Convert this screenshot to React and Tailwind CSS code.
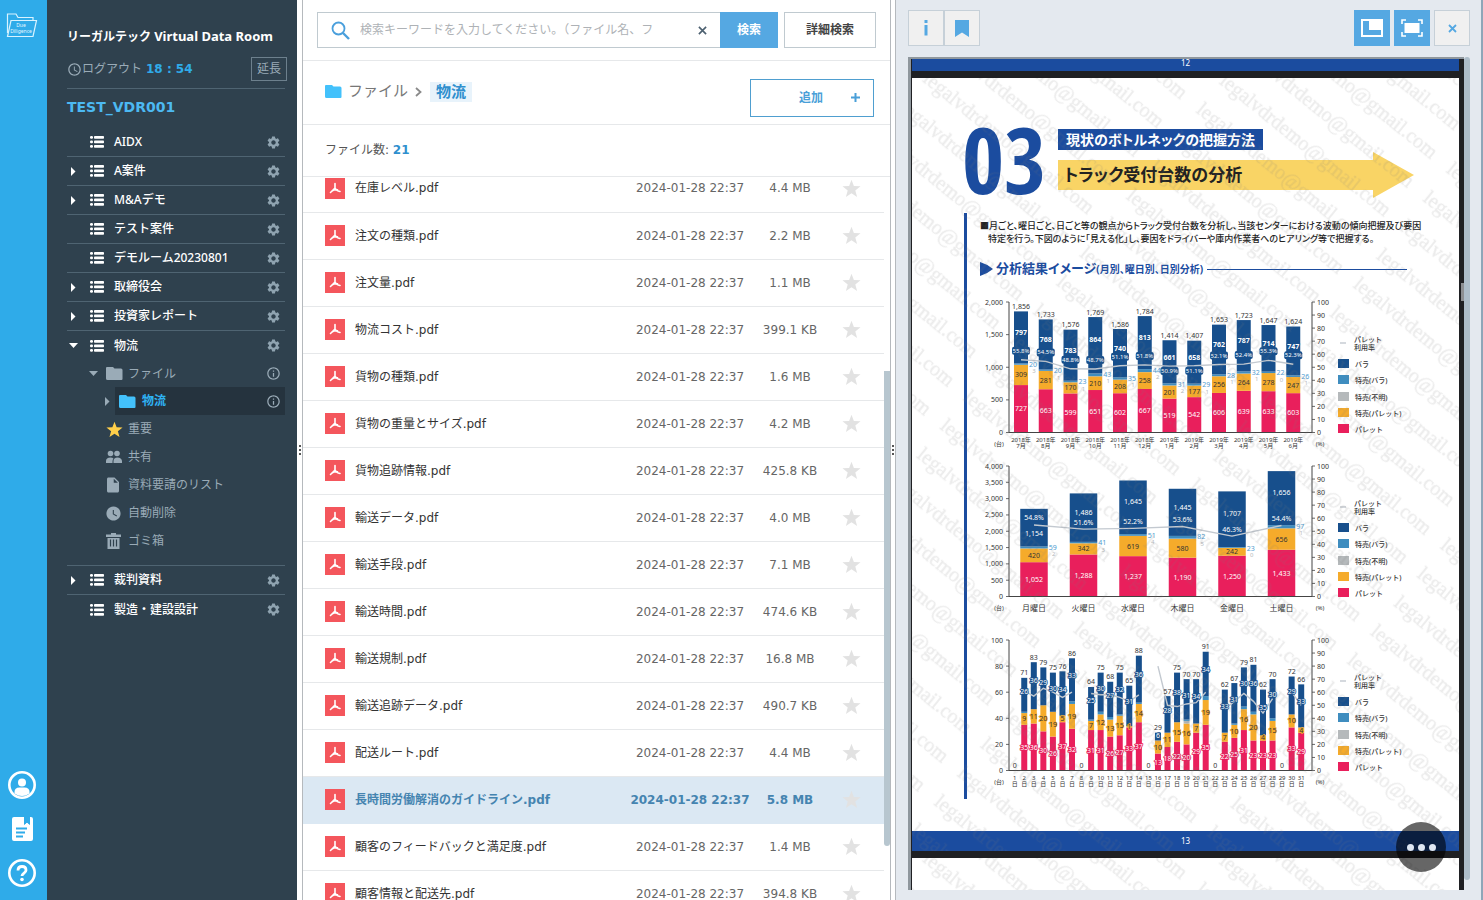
import React from "react";
import { MdSettings, MdInfoOutline, MdInsertDriveFile, MdWatchLater, MdAccessTime } from "react-icons/md";

const CJK = "font-['Noto_Sans','Noto_Sans_CJK_JP',sans-serif]";

const ListIcon = () => (
  <svg width="14" height="12" viewBox="0 0 14 12" fill="#fff" aria-hidden="true">
    {[0, 4.5, 9].map((y) => (
      <g key={y}>
        <rect x="0" y={y} width="3" height="2.8" rx="1.2" />
        <rect x="4" y={y} width="10" height="2.8" rx="0.8" />
      </g>
    ))}
  </svg>
);

const Caret = ({ open, className = "" }) => (
  <svg width="9" height="9" viewBox="0 0 9 9" fill="currentColor" className={className} aria-hidden="true">
    {open ? <path d="M0 2h9L4.500 7z" /> : <path d="M2 0v9L6.500 4.500z" />}
  </svg>
);

const Folder = ({ color }) => (
  <svg width="17" height="15" viewBox="0 0 17 15" aria-hidden="true">
    <path d="M0 2Q0 1 1 1h6l1.500 1.500H15q1.500 0 1.500 1.500V13q0 1-1 1H1.500Q0 14 0 12.500z" fill={color} />
  </svg>
);

const Star = ({ size, color }) => (
  <svg width={size} height={size} viewBox="0 0 20 20" fill={color} aria-hidden="true">
    <path d="M10 .8l2.500 6.600 7 .3-5.500 4.400 1.900 6.800L10 15l-5.900 3.900L6 12.100.5 7.700l7-.3z" />
  </svg>
);

const People = () => (
  <svg width="16" height="14" viewBox="0 0 16 14" fill="#9aabb7" aria-hidden="true">
    <circle cx="4.500" cy="3.500" r="2.800" />
    <circle cx="11" cy="3.500" r="2.800" />
    <path d="M0 13v-2q0-3.500 4.500-3.500 2 0 3 1-1 1.200-1 3V13zM7.500 13v-2Q7.500 7.500 11.500 7.500T16 11v2z" />
  </svg>
);

const Trash = () => (
  <svg width="15" height="16" viewBox="0 0 15 16" aria-hidden="true">
    <path d="M5 0h5v1.500h5V4H0V1.500h5zM1.500 5h12v11h-12z" fill="#9aabb7" />
    <path d="M4.500 6.500v7M7.500 6.500v7M10.500 6.500v7" stroke="#2f414e" strokeWidth="1.200" />
  </svg>
);

const PdfIcon = () => (
  <svg width="20" height="21" viewBox="0 0 20 21" aria-hidden="true">
    <rect width="20" height="21" fill="#f4565c" />
    <path d="M10 5.500v4.500M10 10l-4.500 4.500M10 10q1.500 3 5 3.500M7 13q2-1.500 5.500-1.200" fill="none" stroke="#fff" strokeWidth="1.600" strokeLinecap="round" />
  </svg>
);

const topItems = [
  { name: "AIDX" },
  { name: "A案件", caret: true },
  { name: "M&Aデモ", caret: true },
  { name: "テスト案件" },
  { name: "デモルーム20230801" },
  { name: "取締役会", caret: true },
  { name: "投資家レポート", caret: true },
];
const bottomItems = [{ name: "裁判資料", caret: true, last: false }, { name: "製造・建設設計", last: true }];

function RoomItem({ item, border = true, open = false }) {
  return (
    <div className={"flex h-[29px] items-center " + (border ? "border-b border-[#4f6472]" : "")}>
      <button aria-label={item.name + "を展開"} className="flex w-[23px] items-center pl-[2px] text-white">
        {(item.caret || open) && <Caret open={open} />}
      </button>
      <ListIcon />
      <a href="#" className="ml-[10px] flex-1 text-[12px] font-medium text-white">{item.name}</a>
      <button aria-label={item.name + "の設定"} className="mr-1 text-[#8fa3b0]"><MdSettings size={15} /></button>
    </div>
  );
}

function SubItem({ icon, children }) {
  return (
    <a href="#" className="flex h-7 items-center pl-[39px] text-[12px] text-[#9aabb7]">
      <span className="flex w-[22px] items-center">{icon}</span>
      {children}
    </a>
  );
}

function Rail() {
  return (
    <nav className="flex w-[47px] shrink-0 flex-col items-center justify-between bg-[#2fabe9] pb-[13px] pr-[3px] pt-[13px]">
      <a href="#" aria-label="Due Diligence">
        <svg width="32" height="26" viewBox="0 0 32 26" fill="none" stroke="#d9f3ff" strokeWidth="1.200">
          <path d="M1.500 20V1h8.500l2 3.500h15V7.500" />
          <path d="M5 7.500h25.500L27 23.500H1.500z" />
          <text x="15" y="14" fontSize="5" textAnchor="middle" fill="#e6f8ff" stroke="none" fontFamily="Noto Sans">Due</text>
          <text x="15" y="20" fontSize="5" textAnchor="middle" fill="#e6f8ff" stroke="none" fontFamily="Noto Sans">Diligence</text>
        </svg>
      </a>
      <div className="flex flex-col items-center gap-4">
        <button aria-label="アカウント">
          <svg width="28" height="28" viewBox="0 0 28 28">
            <circle cx="14" cy="14" r="12.700" fill="none" stroke="#fff" strokeWidth="2.600" />
            <circle cx="14" cy="11.500" r="4" fill="#fff" />
            <path d="M6.500 22.500v-1.500q0-4.500 5-4.500h5q5 0 5 4.500v1.500q-7.500 5-15 0z" fill="#fff" />
          </svg>
        </button>
        <button aria-label="マニュアル">
          <svg width="28" height="28" viewBox="0 0 28 28">
            <path d="M6 2h10v8l3-2.500 3 2.500V2h1q2 0 2 2v20q0 2-2 2H6q-2 0-2-2V4q0-2 2-2z" fill="#fff" />
            <path d="M8 13.500h11M8 17.500h9M8 21.500h7" stroke="#2fabe9" strokeWidth="1.800" />
            <path d="M16.500 2v7l2.500-2.200L21.500 9V2" fill="none" stroke="#2fabe9" strokeWidth="1" />
          </svg>
        </button>
        <button aria-label="ヘルプ">
          <svg width="28" height="28" viewBox="0 0 28 28" fill="none" stroke="#fff">
            <circle cx="14" cy="14" r="12.700" strokeWidth="2.600" />
            <path d="M10 11.500q0-4 4-4t4 3.700c0 3-4 2.800-4 5.800" strokeWidth="2.800" />
            <circle cx="14" cy="20.500" r="1.800" fill="#fff" stroke="none" />
          </svg>
        </button>
      </div>
    </nav>
  );
}

function Sidebar() {
  return (
    <aside className="w-[250px] shrink-0 bg-[#2f414e] pl-5 pr-3 pt-[26px]">
      <h1 className="whitespace-nowrap text-[12px] font-bold leading-5 text-white">
        リーガルテック <span className="text-[13px]">Virtual Data Room</span>
      </h1>
      <div className="mt-[10px] flex h-6 items-center justify-between">
        <span className="flex items-center text-[12px] text-[#9aabb7]">
          <MdAccessTime size={15} />
          <span>ログアウト</span>
          <span className="ml-1 font-['DejaVu_Sans',sans-serif] text-[12px] font-bold text-[#2fabe9]">18 : 54</span>
        </span>
        <button className="-mr-[2px] h-6 border border-[#6d808d] px-[5px] text-[12px] leading-5 text-[#9aabb7]">延長</button>
      </div>
      <div className="mt-[7px] border-t border-[#4f6472] pb-[12px] pt-[9px] font-['DejaVu_Sans',sans-serif] text-[14px] font-bold leading-[18px] text-[#4cb9f2]">TEST_VDR001</div>
      {topItems.map((it) => <RoomItem key={it.name} item={it} />)}
      <RoomItem item={{ name: "物流" }} open border={false} />
      <div className="border-b border-[#4f6472] pb-[10px]">
        <div className="flex h-[27px] items-center pl-[22px] text-[12px] text-[#9aabb7]">
          <Caret open />
          <span className="ml-2"><Folder color="#9aabb7" /></span>
          <a href="#" className="ml-[5px] flex-1">ファイル</a>
          <MdInfoOutline size={15} className="mr-1" />
        </div>
        <div className="flex h-7 items-center pl-9 text-[12px] text-[#9aabb7]">
          <Caret />
          <div className="ml-[3px] flex h-7 flex-1 items-center bg-[#25333e] pl-1">
            <Folder color="#43c1fb" />
            <a href="#" className="ml-[6px] flex-1 font-bold text-[#2fb3f5]">物流</a>
            <MdInfoOutline size={15} className="mr-1" />
          </div>
        </div>
        <SubItem icon={<Star size={17} color="#ffcf4a" />}>重要</SubItem>
        <SubItem icon={<People />}>共有</SubItem>
        <SubItem icon={<MdInsertDriveFile size={18} className="-ml-[2px]" />}>資料要請のリスト</SubItem>
        <SubItem icon={<MdWatchLater size={17} className="-ml-px" />}>自動削除</SubItem>
        <SubItem icon={<Trash />}>ゴミ箱</SubItem>
      </div>
      {bottomItems.map((it) => <RoomItem key={it.name} item={it} border={!it.last} />)}
    </aside>
  );
}

const files = [
  ["在庫レベル.pdf", "4.4 MB"], ["注文の種類.pdf", "2.2 MB"], ["注文量.pdf", "1.1 MB"],
  ["物流コスト.pdf", "399.1 KB"], ["貨物の種類.pdf", "1.6 MB"], ["貨物の重量とサイズ.pdf", "4.2 MB"],
  ["貨物追跡情報.pdf", "425.8 KB"], ["輸送データ.pdf", "4.0 MB"], ["輸送手段.pdf", "7.1 MB"],
  ["輸送時間.pdf", "474.6 KB"], ["輸送規制.pdf", "16.8 MB"], ["輸送追跡データ.pdf", "490.7 KB"],
  ["配送ルート.pdf", "4.4 MB"], ["長時間労働解消のガイドライン.pdf", "5.8 MB"],
  ["顧客のフィードバックと満足度.pdf", "1.4 MB"], ["顧客情報と配送先.pdf", "394.8 KB"],
];

function Grip({ className }) {
  return (
    <div className={"flex shrink-0 flex-col items-center justify-center gap-[2px] bg-white " + className}>
      <i className="size-[2px] bg-[#555]" /><i className="size-[2px] bg-[#555]" /><i className="size-[2px] bg-[#555]" />
    </div>
  );
}

function FilesPanel() {
  return (
    <main className="flex w-[589px] shrink-0 flex-col border-x border-[#b5b9bd] bg-white font-['DejaVu_Sans','Noto_Sans_CJK_JP',sans-serif]">
      <div className="flex h-[61px] shrink-0 items-start gap-[6px] border-b border-[#e6e8ea] px-[14px] pt-3">
        <form className="flex h-9 flex-1">
          <label className="flex min-w-0 flex-1 items-center border border-r-0 border-[#c0cad0] pl-[13px]">
            <svg width="19" height="19" viewBox="0 0 19 19" fill="none" stroke="#4a9fdc" aria-hidden="true">
              <circle cx="7.500" cy="7.500" r="6" strokeWidth="1.800" />
              <path d="M12 12l6 6" strokeWidth="2.400" />
            </svg>
            <input aria-label="検索キーワード" placeholder="検索キーワードを入力してください。（ファイル名、フ" className="ml-[10px] w-[322px] min-w-0 bg-transparent text-[12px] outline-none placeholder:text-[#aeb2b6]" />
            <button type="button" aria-label="クリア" className="ml-4 text-[#4c6070]">
              <svg width="9" height="9" viewBox="0 0 10 10"><path d="M1 1l8 8M9 1l-8 8" stroke="currentColor" strokeWidth="1.800" /></svg>
            </button>
          </label>
          <button type="button" className="w-[58px] bg-[#55a8e2] text-[12px] font-bold text-white">検索</button>
        </form>
        <button className="h-9 w-[92px] border border-[#c0cad0] text-[12px] font-bold text-[#444]">詳細検索</button>
      </div>
      <div className="flex h-16 shrink-0 items-center border-b border-[#e6e8ea] pl-[22px] pr-4">
        <nav className="flex flex-1 items-center pb-[2px] text-[15px] text-[#777]">
          <Folder color="#43c1fb" />
          <a href="#" className="ml-[6px]">ファイル</a>
          <svg width="7" height="10" viewBox="0 0 7 10" className="ml-[7px] mr-2" fill="none" stroke="#8a8a8a" strokeWidth="1.800" aria-hidden="true"><path d="M1 1l4.500 4L1 9" /></svg>
          <a href="#" className="bg-[#e8f3fb] px-[6px] font-bold leading-5 text-[#2f8fce]">物流</a>
        </nav>
        <button className="mt-[10px] flex h-[38px] w-[124px] items-center justify-end gap-7 border border-[#4f9fd0] pr-[13px] text-[12px] font-bold text-[#4a9fd8]">
          <span>追加</span>
          <svg width="9" height="9" viewBox="0 0 9 9" stroke="currentColor" strokeWidth="2" aria-hidden="true"><path d="M4.500 0v9M0 4.500h9" /></svg>
        </button>
      </div>
      <div className="flex h-[52px] shrink-0 items-center border-b border-[#e6e8ea] pb-[2px] pl-[22px] text-[12px] text-[#555]">
        ファイル数:&nbsp;<b className="text-[#2f8fce]">21</b>
      </div>
      <div className="flex min-h-0 flex-1 overflow-hidden">
        <table className="-mt-3 h-fit flex-1 table-fixed border-collapse self-start text-[12px]">
          <colgroup><col /><col className="w-[120px]" /><col className="w-20" /><col className="w-[54px]" /></colgroup>
          <tbody>
            {files.map(([name, size]) => {
              const on = name.startsWith("長時間");
              return (
                <tr key={name} className={"h-[47px] border-b " + (on ? "border-[#dbe8f3] bg-[#dbe8f3] font-bold text-[#4584b0]" : "border-[#e6e8ea] text-[#666]")}>
                  <td className="p-0 pl-[22px]">
                    <a href="#" className={"flex items-center gap-[10px] " + (on ? "" : "text-[#333]")}><PdfIcon />{name}</a>
                  </td>
                  <td className="whitespace-nowrap p-0 text-center">2024-01-28 22:37</td>
                  <td className="whitespace-nowrap p-0 text-center">{size}</td>
                  <td className="p-0 pr-3"><button aria-label="重要" className="mx-auto block"><Star size={19} color="#e2e2e2" /></button></td>
                </tr>
              );
            })}
          </tbody>
        </table>
        <div className="flex w-[6px] shrink-0 flex-col">
          <div className="flex-[194]" />
          <div className="flex-[476] rounded-b-full bg-[#b7c6cf]" />
          <div className="flex-[54]" />
        </div>
      </div>
    </main>
  );
}

const C = { bara: "#174f8c", sb: "#3f8dbf", unk: "#b5b9bb", sp: "#f5ab2b", pal: "#e91f5c" };
const AX = 29, AXR = 332, TOP = 12, H = 130.5;

const T = ({ children, size = 7, fill = "#333", anchor = "middle", ...p }) => (
  <text fontSize={size} fill={fill} textAnchor={anchor} dominantBaseline="central" {...p}>{children}</text>
);

function Chart({ height, max, step, xs, width, data, lines, labels, mode, name }) {
  const y = (v) => TOP + H - (v / max) * H;
  const ticks = [];
  for (let v = 0; v <= max; v += step) ticks.push(v);
  const halo = (c) => ({ stroke: c, strokeWidth: 1.6, paintOrder: "stroke" });
  const legend = [["バラ", C.bara, 62], ["特売(バラ)", C.sb, 78], ["特売(不明)", C.unk, 95], ["特売(パレット)", C.sp, 111], ["パレット", C.pal, 127]];
  return (
    <svg viewBox={"0 0 440 " + height} className="block h-auto w-full" role="img" aria-label={name}>
      {ticks.map((v) => (
        <g key={v}>
          <path d={`M${AX - 3} ${y(v)}H${AX}`} stroke="#444" strokeWidth="0.800" />
          <T x={AX - 6} y={y(v)} anchor="end">{v.toLocaleString("en-US")}</T>
        </g>
      ))}
      {[0, 10, 20, 30, 40, 50, 60, 70, 80, 90, 100].map((v) => (
        <g key={v}>
          <path d={`M${AXR} ${TOP + H - v * H / 100}h3`} stroke="#444" strokeWidth="0.800" />
          <T x={AXR + 5} y={TOP + H - v * H / 100} anchor="start">{v}</T>
        </g>
      ))}
      {data.map((d, i) => {
        if (!d) return null;
        const [pal, sp, unk, sb, bara] = d;
        let acc = 0;
        return [[pal, C.pal], [sp, C.sp], [unk, C.unk], [sb, C.sb], [bara, C.bara]].map(([v, c], k) => {
          acc += v;
          return <rect key={i + "-" + k} x={xs[i] - width / 2} y={y(acc)} width={width} height={(v / max) * H} fill={c} />;
        });
      })}
      <path d={`M${AX} ${TOP}V${TOP + H}H${AXR}V${TOP}`} fill="none" stroke="#444" strokeWidth="1" />
      {lines.map((seg, i) => (
        <polyline key={i} fill="none" stroke="#c3c9d0" strokeWidth="1.400" points={seg.map(([k, r]) => xs[k] + "," + (TOP + H - r * H / 100)).join(" ")} />
      ))}
      {data.map((d, i) => {
        const x = xs[i];
        if (!d) return <T key={i} x={x} y={y(0) - 5}>0</T>;
        const [pal, sp, unk, sb, bara, total, rate] = d;
        const lowB = pal + sp + unk + sb;
        const isDaily = mode === "day";
        const fmt = (n) => n.toLocaleString("en-US");
        const baraY = y(lowB + bara * (mode === "week" && i === 0 ? 0.34 : 0.6));
        return (
          <g key={i}>
            {mode !== "week" && <T x={x} y={y(total) - 5}>{fmt(total)}</T>}
            <T x={x} y={baraY} fill="#fff" fontWeight={mode === "month" ? 700 : 400} {...halo(C.bara)}>{fmt(bara)}</T>
            {rate && (
              <g>
                {mode === "month" && <rect x={x - 9} y={TOP + H - rate * H / 100 - (total > 1500 ? 13 : -1)} width="18" height="8" rx="2" fill={C.bara} />}
                <T x={x} y={TOP + H - rate * H / 100 - (mode === "month" ? (total > 1500 ? 9 : -5) : 7)} size={mode === "month" ? 6 : 7} fill="#fff">{rate.toFixed(1)}%</T>
              </g>
            )}
            <T x={x} y={y(pal + sp / 2)} {...(isDaily ? halo(C.sp) : {})}>{sp}</T>
            <T x={x} y={y(pal / 2)} fill="#fff" {...(isDaily ? halo(C.pal) : {})}>{fmt(pal)}</T>
            {!isDaily && (
              <g>
                <T x={x + width / 2 + 5} y={y(lowB) + 1} fill="#4f9bd0">{sb}</T>
                <T x={x + width / 2 + 6} y={y(lowB) + 8} size={6} fill="#b5b9bb">{unk}</T>
              </g>
            )}
          </g>
        );
      })}
      {labels.map((l, i) => l.map((s, k) => (
        <T key={i + "-" + k} x={xs[i]} y={TOP + H + (mode === "week" ? 11 : 7 + k * 6)} size={mode === "week" ? 8 : 6}>{s}</T>
      )))}
      <T x={19} y={TOP + H + 11} size={6}>(台)</T>
      <T x={340} y={TOP + H + 11} size={6}>(%)</T>
      <path d={`M360 ${TOP + 41}h6`} stroke="#c3c9d0" strokeWidth="1.400" />
      <T x={374} y={TOP + 37} size={7} anchor="start" fontWeight={500}>パレット</T>
      <T x={374} y={TOP + 45} size={7} anchor="start" fontWeight={500}>利用率</T>
      {legend.map(([s, c, ly]) => (
        <g key={s}>
          <rect x="358" y={TOP + ly - 5} width="11" height="9" fill={c} />
          <T x={375} y={TOP + ly} size={7} anchor="start" fontWeight={500}>{s}</T>
        </g>
      ))}
    </svg>
  );
}

const monthly = [
  [727, 309, 3, 20, 797, 1856, 55.8], [663, 281, 1, 20, 768, 1733, 54.5], [599, 170, 1, 23, 783, 1576, 48.8],
  [651, 210, 1, 43, 864, 1769, 48.7], [602, 208, 1, 35, 740, 1586, 51.1], [667, 258, 2, 44, 813, 1784, 51.8],
  [519, 201, 2, 31, 661, 1414, 50.9], [542, 177, 1, 29, 658, 1407, 51.1], [606, 256, 1, 28, 762, 1653, 52.1],
  [639, 264, 1, 32, 787, 1723, 52.4], [633, 278, 0, 22, 714, 1647, 55.3], [603, 247, 1, 26, 747, 1624, 52.3],
];
const weekly = [
  [1052, 420, 2, 59, 1154, 2687, 54.8], [1288, 342, 3, 41, 1486, 3160, 51.6], [1237, 619, 4, 51, 1645, 3556, 52.2],
  [1190, 580, 5, 82, 1445, 3302, 53.6], [1250, 242, 0, 23, 1707, 3222, 46.3], [1433, 656, 1, 97, 1656, 3843, 54.4],
];
const daily = [
  null, [35, 9, 0, 1, 26, 71], [36, 11, 0, 0, 36, 83], [30, 20, 0, 0, 29, 79], [26, 19, 0, 0, 30, 75], [37, 5, 0, 0, 34, 76], [32, 19, 0, 2, 33, 86],
  null, [31, 7, 0, 1, 25, 64], [31, 12, 0, 2, 30, 75], [26, 13, 0, 2, 27, 68], [27, 15, 0, 1, 32, 75], [33, 1, 0, 0, 31, 65], [37, 14, 0, 1, 36, 88],
  null, [13, 10, 0, 0, 6, 29], [18, 11, 0, 0, 28, 57], [22, 15, 0, 0, 38, 75], [20, 16, 2, 1, 31, 70], [29, 7, 0, 0, 34, 70], [35, 19, 0, 3, 34, 91],
  null, [22, 7, 0, 0, 33, 62], [25, 10, 0, 1, 31, 67], [31, 16, 0, 2, 30, 79], [23, 20, 0, 2, 36, 81], [23, 4, 0, 0, 35, 62], [23, 15, 0, 2, 30, 70],
  null, [33, 10, 0, 0, 29, 72], [29, 4, 0, 0, 33, 66],
];
const dailyLines = [
  [[1, 61], [2, 57], [3, 63], [4, 60], [5, 56], [6, 60]],
  [[8, 59], [9, 58], [10, 58], [11, 56], [12, 53], [13, 58]],
  [[15, 80], [16, 50], [17, 49], [18, 51], [19, 52], [20, 60]],
  [[22, 47], [23, 53], [24, 59], [25, 53], [26, 44], [27, 55]],
  [[29, 60], [30, 50]],
];
const months = ["7月", "8月", "9月", "10月", "11月", "12月", "1月", "2月", "3月", "4月", "5月", "6月"];

function Watermark({ id }) {
  return (
    <svg className="pointer-events-none absolute inset-0 size-full" aria-hidden="true">
      <defs>
        <pattern id={id} width="232" height="37" patternUnits="userSpaceOnUse" patternTransform="translate(320 -15) rotate(39)">
          <text x="2" y="24" fontSize="20" fontFamily="Liberation Serif" fill="#777" stroke="#777" strokeWidth="0.300" opacity="0.150">legalvdrdemo@gmail.com</text>
        </pattern>
      </defs>
      <rect width="100%" height="100%" fill={"url(#" + id + ")"} />
    </svg>
  );
}

function PageThirteen() {
  return (
    <article className="relative bg-white pt-[49px]">
      <div className="flex h-[86px] pl-[50px] pr-[45px]">
        <span className="w-24 text-[91px] font-bold leading-[64px] text-[#1b4c9f] font-['Liberation_Sans_Narrow','Open_Sans_Condensed','Roboto_Condensed',sans-serif]">03</span>
        <div className="flex-1 pt-[2px] font-bold [font-feature-settings:'palt']">
          <h2 className="w-fit bg-[#1b4c9f] px-2 text-[14px] leading-[21px] text-white">現状のボトルネックの把握方法</h2>
          <div className="mt-[2px] flex h-[46px] items-center">
            <h3 className="h-[30px] flex-1 whitespace-nowrap bg-[#f9d465] pl-[6px] text-[17px] leading-[29px] text-[#222]">トラック受付台数の分析</h3>
            <svg width="41" height="46" viewBox="0 0 41 46" aria-hidden="true"><path d="M0 0l41 23L0 46z" fill="#f9d465" /></svg>
          </div>
        </div>
      </div>
      <section className="ml-[52px] mr-[39px] border-l-[3px] border-[#1b4c9f] pb-[12px] pl-[13px] pt-[6px]">
        <p className="whitespace-nowrap text-[9px] font-medium leading-[13px] text-[#222] [font-feature-settings:'palt']">
          ■月ごと、曜日ごと、日ごと等の観点からトラック受付台数を分析し、当該センターにおける波動の傾向把握及び要因<br />
          <span className="pl-2">特定を行う。下図のように｢見える化｣し、要因をドライバーや庫内作業者へのヒアリング等で把握する。</span>
        </p>
        <h4 className="mr-[13px] mt-[14px] flex h-5 items-center whitespace-nowrap text-[13px] font-bold text-[#1b4c9f] [font-feature-settings:'palt']">
          <svg width="13" height="14" viewBox="0 0 13 14" className="mr-[3px]" aria-hidden="true"><path d="M0 0q7 2 13 7-6 5-13 7z" fill="#1b4c9f" /></svg>
          分析結果イメージ<span className="text-[10px]">(月別、曜日別、日別分析)</span>
          <span className="ml-1 h-px flex-1 bg-[#1b4c9f]" />
        </h4>
        <div className="pt-[11px]">
          <Chart name="月別" mode="month" height={164} max={2000} step={500} width={14} data={monthly} xs={monthly.map((_, i) => 41 + 24.75 * i)}
            lines={[monthly.map((d, i) => [i, d[6]])]} labels={months.map((m, i) => [(i < 6 ? "2018" : "2019") + "年", m])} />
          <Chart name="曜日別" mode="week" height={174} max={4000} step={500} width={27.5} data={weekly} xs={weekly.map((_, i) => 54 + 49.5 * i)}
            lines={[weekly.map((d, i) => [i, d[6]])]} labels={["月", "火", "水", "木", "金", "土"].map((d) => [d + "曜日"])} />
          <Chart name="日別" mode="day" height={159} max={100} step={20} width={6} data={daily} xs={daily.map((_, i) => 34.7 + 9.55 * i)}
            lines={dailyLines} labels={daily.map((_, i) => [String(i + 1), "日"])} />
        </div>
      </section>
      <footer className="mt-8 h-5 bg-[#1b4c9f] text-center text-[8px] leading-5 text-white">13</footer>
      <Watermark id="wm-main" />
    </article>
  );
}

function Viewer() {
  const blue = "flex h-9 w-9 items-center justify-center bg-[#55a8e2]";
  const light = "flex h-9 w-9 items-center justify-center border border-[#c6d0d8] bg-[#f0f0f0] text-[#55a8e2]";
  return (
    <section className="flex min-w-0 flex-1 flex-col border-l border-r-2 border-l-[#b5b9bd] border-r-[#8fa6b8] bg-[#e4e9ef] pb-[10px] pl-3 pr-[11px] pt-[10px]">
      <div className="flex shrink-0 justify-between">
        <div className="flex">
          <button aria-label="情報" className={light}>
            <svg width="6" height="16" viewBox="0 0 6 16" fill="currentColor"><path d="M1.500 0h3v3h-3zM1.500 5h3v10.500h-3z" /></svg>
          </button>
          <button aria-label="ブックマーク" className={light}>
            <svg width="14" height="17" viewBox="0 0 14 17" fill="currentColor"><path d="M0 0h14v17l-7-4.500L0 17z" /></svg>
          </button>
        </div>
        <div className="flex gap-1">
          <button aria-label="分割表示" className={blue}>
            <svg width="22" height="18" viewBox="0 0 22 18"><path d="M1 1h20v16H1z" fill="none" stroke="#fff" strokeWidth="2" /><path d="M8 1h13v10H8z" fill="#fff" /></svg>
          </button>
          <button aria-label="全画面" className={blue}>
            <svg width="22" height="18" viewBox="0 0 22 18"><rect x="3.500" y="4" width="15" height="10" fill="#fff" /><path d="M1 5V1h4M17 1h4v4M21 13v4h-4M5 17H1v-4" fill="none" stroke="#fff" strokeWidth="1.600" /></svg>
          </button>
          <button aria-label="閉じる" className={light}>
            <svg width="9" height="9" viewBox="0 0 9 9"><path d="M1 1l7 7M8 1L1 8" stroke="currentColor" strokeWidth="1.800" /></svg>
          </button>
        </div>
      </div>
      <div className="relative mt-[11px] flex min-h-0 flex-1">
        <div className="flex min-w-0 flex-1 flex-col overflow-hidden border-l-[3px] border-t-2 border-[#8f979d] bg-[#1f2023] pl-px pr-[5px]">
          <div className="h-3 shrink-0 bg-[#1b4c9f] text-center text-[8px] leading-[8px] text-white">12</div>
          <div className="h-[7px] shrink-0" />
          <PageThirteen />
          <div className="relative mt-[7px] min-h-0 flex-1 bg-white"><Watermark id="wm-next" /></div>
        </div>
        <div className="mb-[10px] w-[6px] shrink-0 rounded-full bg-[#adbdc9]" />
        <div className="absolute right-[6px] top-[226px] h-[18px] w-[3px] bg-[#8d8f92]" />
        <button aria-label="メニュー" className="absolute bottom-[18px] right-[24px] flex size-[50px] items-center justify-center gap-1 rounded-full bg-black/60">
          <i className="size-[7px] rounded-full bg-[#dfe7f2]" /><i className="size-[7px] rounded-full bg-[#dfe7f2]" /><i className="size-[7px] rounded-full bg-[#dfe7f2]" />
        </button>
      </div>
    </section>
  );
}

export default function App() {
  return (
    <div lang="ja" className={"flex h-screen overflow-hidden bg-white " + CJK}>
      <Rail />
      <Sidebar />
      <Grip className="w-[5px]" />
      <FilesPanel />
      <Grip className="w-1" />
      <Viewer />
    </div>
  );
}
